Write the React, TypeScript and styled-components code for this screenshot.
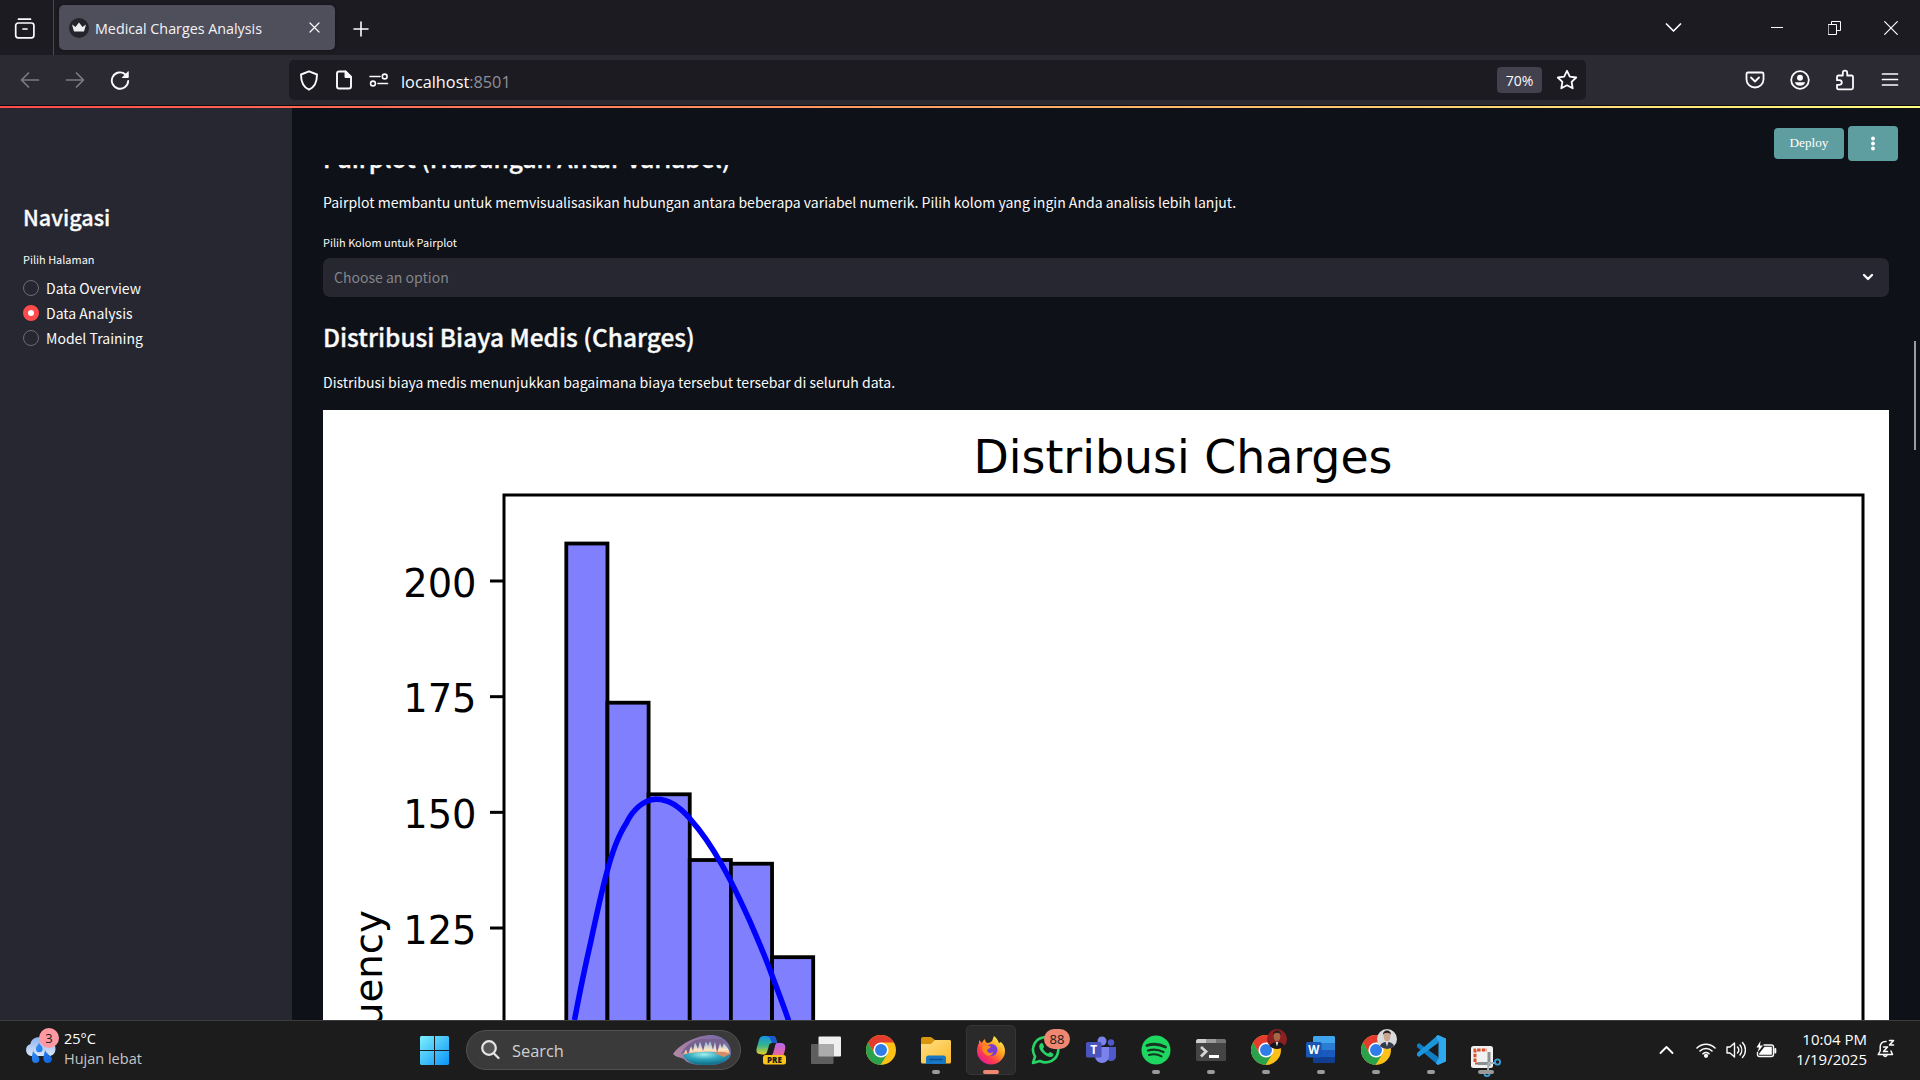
import React from "react";
import styled, { createGlobalStyle } from "styled-components";

const uiFont = `"Open Sans", "Noto Sans", sans-serif`;
const pageFont = `"Noto Sans CJK SC", "Noto Sans", sans-serif`;

const GlobalStyle = createGlobalStyle`
  * { box-sizing: border-box; }
  body { margin: 0; background: #0e1117; overflow: hidden; }
  svg { display: block; flex: none; }
`;

const Screen = styled.div`
  width: 1920px;
  height: 1080px;
  display: flex;
  flex-direction: column;
  overflow: hidden;
  font-family: ${uiFont};
`;

/* ---------- Browser chrome ---------- */

const TabStrip = styled.header`
  height: 55px;
  display: flex;
  align-items: center;
  background: #1c1b22;
  color: #fbfbfe;
`;

const FirefoxView = styled.div`
  width: 54px;
  height: 55px;
  padding: 1px 0 0 14px;
  display: flex;
  align-items: center;
  border-right: 1px solid #4b4a54;
`;

const Tab = styled.div`
  width: 276px;
  height: 45px;
  margin-left: 5px;
  padding: 0 15px 0 10px;
  display: flex;
  align-items: center;
  gap: 6px;
  border-radius: 5px;
  background: #4f4e5b;
  box-shadow: 0 0 3px rgba(0, 0, 0, 0.5);
`;

const TabTitle = styled.span`
  flex: 1;
  padding-top: 2px;
  font-size: 14.3px;
  line-height: 20px;
  white-space: nowrap;
  color: #f3f3f6;
`;

const NewTab = styled.div`
  margin: 2px 0 0 18px;
`;

const WindowControls = styled.div`
  margin-left: auto;
  padding-right: 22px;
  display: flex;
  align-items: center;
`;

const ControlSlot = styled.div<{ $before: number }>`
  margin-left: ${(p) => p.$before}px;
`;

const Toolbar = styled.div`
  height: 51px;
  display: flex;
  align-items: center;
  background: #2b2a33;
  border-bottom: 1px solid #0c0c10;
`;

const NavButtons = styled.div`
  width: 289px;
  padding-left: 20px;
  display: flex;
  align-items: center;
  gap: 25px;
`;

const UrlBar = styled.div`
  width: 1297px;
  height: 40px;
  padding: 0 7px 0 10px;
  display: flex;
  align-items: center;
  border-radius: 5px;
  background: #1c1b22;
`;

const UrlIcons = styled.div`
  display: flex;
  align-items: center;
  gap: 16px;
`;

const UrlText = styled.span`
  flex: 1;
  padding: 3px 0 0 12px;
  font-size: 16.3px;
  line-height: 22px;
  color: #fbfbfe;
`;

const UrlPort = styled.span`
  color: #8f8e96;
`;

const ZoomBadge = styled.span`
  width: 45px;
  height: 26px;
  margin-right: 13px;
  padding-top: 1px;
  border-radius: 4px;
  background: #42414d;
  color: #fbfbfe;
  font-size: 14px;
  line-height: 25px;
  text-align: center;
`;

const ToolbarActions = styled.div`
  margin-left: auto;
  padding-right: 20px;
  display: flex;
  align-items: center;
  gap: 25px;
`;

const Decoration = styled.div`
  height: 2px;
  flex: none;
  background: linear-gradient(90deg, #ff4b4b, #fffd80);
`;

/* ---------- Page ---------- */

const Page = styled.div`
  flex: 1;
  min-height: 0;
  display: flex;
  position: relative;
  font-family: ${pageFont};
  color: #fafafa;
`;

const Sidebar = styled.aside`
  width: 292px;
  padding: 94px 0 0 23px;
  background: #262730;
`;

const SidebarTitle = styled.h2`
  margin: 0;
  font-size: 21.6px;
  font-weight: 500;
  line-height: 30px;
  -webkit-text-stroke: 0.3px #fafafa;
`;

const FieldLabel = styled.div<{ $top: number }>`
  margin-top: ${(p) => p.$top}px;
  font-size: 10.95px;
  line-height: 16px;
`;

const RadioList = styled.div`
  margin-top: 8px;
`;

const RadioRow = styled.label`
  height: 25px;
  display: flex;
  align-items: center;
  gap: 7px;
  font-size: 14.04px;
  line-height: 24px;
`;

const RadioMark = styled.span<{ $on?: boolean }>`
  width: 16px;
  height: 16px;
  flex: none;
  border-radius: 50%;
  border: ${(p) => (p.$on ? "5px solid #ff4b4b" : "1px solid #6b6c74")};
  background: ${(p) => (p.$on ? "#fff" : "#262730")};
`;

const Main = styled.main`
  flex: 1;
  display: flex;
  flex-direction: column;
  background: #0e1117;
`;

const AppHeader = styled.div`
  height: 57px;
  flex: none;
  padding: 18px 22px 0 0;
  display: flex;
  justify-content: flex-end;
  align-items: flex-start;
  gap: 4px;
`;

const DeployButton = styled.button`
  width: 70px;
  height: 31px;
  margin: 2px 0 0;
  padding: 0 0 1px;
  border: 0;
  border-radius: 4px;
  background: #5f9ea0;
  color: #fff;
  font-family: "Liberation Serif", serif;
  font-size: 13.2px;
`;

const MenuButton = styled.button`
  width: 50px;
  height: 35px;
  padding: 0;
  display: flex;
  align-items: center;
  justify-content: center;
  border: 0;
  border-radius: 4px;
  background: #5f9ea0;
`;

const Content = styled.div`
  flex: 1;
  min-height: 0;
  overflow: hidden;
  padding: 0 31px;
  display: flex;
  flex-direction: column;
`;

const Heading = styled.h3<{ $top: number }>`
  margin: ${(p) => p.$top}px 0 0;
  flex: none;
  font-size: 24.45px;
  font-weight: 500;
  line-height: 36px;
  -webkit-text-stroke: 0.35px #fafafa;
`;

const Paragraph = styled.p<{ $top: number }>`
  margin: ${(p) => p.$top}px 0 0;
  flex: none;
  font-size: 14.04px;
  line-height: 22px;
`;

const Select = styled.div`
  height: 39px;
  flex: none;
  margin-top: 8px;
  padding: 0 15px 1px 11px;
  display: flex;
  align-items: center;
  justify-content: space-between;
  border-radius: 7px;
  background: #262730;
  color: #83848a;
  font-size: 14.04px;
  line-height: 22px;
`;

const Figure = styled.div`
  flex: none;
  margin-top: 17px;
  height: 610px;
  background: #fff;
`;

const ScrollThumb = styled.div`
  position: absolute;
  top: 233px;
  right: 4px;
  width: 2px;
  height: 109px;
  background: #9c9ca0;
`;

/* ---------- Taskbar ---------- */

const Taskbar = styled.footer`
  height: 60px;
  flex: none;
  display: flex;
  border-top: 1px solid #3d3d3d;
  background: #1c1c1c;
  color: #fff;
`;

const Weather = styled.div`
  width: 420px;
  padding: 8px 0 0 24px;
  display: flex;
  gap: 8px;
`;

const TwoLines = styled.div<{ $right?: boolean }>`
  display: flex;
  flex-direction: column;
  font-size: ${(p) => (p.$right ? 15 : 14.5)}px;
  line-height: 20px;
  text-align: ${(p) => (p.$right ? "right" : "left")};
`;

const Muted = styled.span`
  color: #c5c5c5;
`;

const BadgeHost = styled.div`
  position: relative;
`;

const CountBadge = styled.span<{ $color: string; $w: number; $x: number; $y: number }>`
  position: absolute;
  left: ${(p) => p.$x}px;
  top: ${(p) => p.$y}px;
  width: ${(p) => p.$w}px;
  height: 20px;
  border-radius: 10px;
  background: ${(p) => p.$color};
  color: #1b1b1b;
  font-size: 13px;
  line-height: 20px;
  text-align: center;
`;

const StartButton = styled.div`
  padding: 15px 17px 0 0;
`;

const SearchBox = styled.div`
  width: 275px;
  height: 40px;
  margin: 9px 0 0;
  padding: 0 8px 0 14px;
  display: flex;
  align-items: center;
  border: 1px solid #525252;
  border-radius: 20px;
  background: #3a3a3a;
`;

const SearchText = styled.span`
  flex: 1;
  padding: 1px 0 0 12px;
  font-size: 16.4px;
  line-height: 22px;
  color: #d0d0d0;
`;

const Apps = styled.div`
  padding: 4px 0 0 5px;
  display: flex;
  gap: 5px;
`;

const AppTile = styled.div<{ $active?: boolean; $drop?: number }>`
  width: 50px;
  height: 50px;
  padding-top: ${(p) => 9 + (p.$drop ?? 0)}px;
  display: flex;
  flex-direction: column;
  align-items: center;
  border: 1px solid ${(p) => (p.$active ? "#363636" : "transparent")};
  border-radius: 5px;
  background: ${(p) => (p.$active ? "#2a2a2a" : "transparent")};
`;

const Running = styled.span<{ $active?: boolean; $wide?: boolean; $gap?: number }>`
  width: ${(p) => (p.$active || p.$wide ? 16 : 8)}px;
  height: 4px;
  margin-top: ${(p) => p.$gap ?? 5}px;
  flex: none;
  border-radius: 2px;
  background: ${(p) => (p.$active ? "#f08770" : "#9a9a9a")};
`;

const Tray = styled.div`
  margin-left: auto;
  padding: 8px 25px 0 0;
  display: flex;
`;

const TrayIcons = styled.div`
  height: 40px;
  padding-top: 1px;
  margin-right: 19px;
  display: flex;
  align-items: center;
  gap: 10px;
`;

const TrayArrow = styled.div`
  margin-right: 12px;
`;

const Bell = styled.div`
  padding: 10px 0 0 10px;
`;

/* ---------- Icons ---------- */

type StrokeProps = { w: number; h: number; box: string; sw?: number; color?: string; children: React.ReactNode };

const Stroke = ({ w, h, box, sw = 1.5, color = "#fbfbfe", children }: StrokeProps) => (
  <svg width={w} height={h} viewBox={box} fill="none" stroke={color} strokeWidth={sw} strokeLinecap="round" strokeLinejoin="round">
    {children}
  </svg>
);

const ChromeIcon = ({ avatar }: { avatar?: "red" | "grey" }) => (
  <svg width="30" height="30" viewBox="0 0 30 30" overflow="visible">
    <circle cx="15" cy="15" r="15" fill="#fbc116" />
    <path d="M2 7.5A15 15 0 0 1 28 7.5H15L8.5 18.7z" fill="#e33b2e" />
    <path d="M2 7.5A15 15 0 0 0 14.5 30L21.5 18.8 15 15 8.5 18.8z" fill="#2aa24c" />
    <circle cx="15" cy="15" r="7.6" fill="#fff" />
    <circle cx="15" cy="15" r="6" fill="#2f7de9" />
    {avatar && (
      <g>
        <clipPath id={`clip-${avatar}`}>
          <circle cx="26" cy="4" r="10" />
        </clipPath>
        <g clipPath={`url(#clip-${avatar})`}>
          <rect x="16" y="-6" width="20" height="20" fill={avatar === "red" ? "#8d1f20" : "#d9dadb"} />
          <ellipse cx="26" cy="1.5" rx="3.4" ry="4.8" fill={avatar === "red" ? "#a36647" : "#c9a48f"} />
          <path d="M22 0C21.500-6 30.500-6 30 0C29-3 23-3 22 0" fill="#241c1c" />
          <path d="M18 15C18 9 22 7 26 7S34 9 34 15z" fill={avatar === "red" ? "#17161c" : "#343b4b"} />
          <path d="M24.600 7L26 11.500 27.400 7z" fill="#e2dede" />
        </g>
      </g>
    )}
  </svg>
);

const WeatherIcon = () => (
  <svg width="32" height="35" viewBox="0 -1 32 35">
    <defs>
      <linearGradient id="cloud" x1="0" y1="0" x2="0" y2="1">
        <stop offset="0" stopColor="#8db4ee" />
        <stop offset="1" stopColor="#dbe6fa" />
      </linearGradient>
      <linearGradient id="drop" x1="0" y1="0" x2="1" y2="1">
        <stop offset="0" stopColor="#3d96f5" />
        <stop offset="1" stopColor="#0b62e0" />
      </linearGradient>
    </defs>
    <path d="M7 26A6.200 6.200 0 0 1 6.500 14C7 8 15 5 20 9C26 8 31.500 13 31.500 19C31.500 23.500 28 26 25 26z" fill="url(#cloud)" />
    <path d="M15 12C15 14.500 12 15.500 12 19A3.300 3.300 0 0 0 18.600 19C18.600 15.500 15 14.500 15 12M9 20C9 24 7.500 25 8 29.300A3.700 3.700 0 0 0 15.400 29.300C15.400 25 9 24 9 20M21 19C21 24 19 25 19.500 29.300A4.300 4.300 0 0 0 28 29.300C28 25 21 24 21 19" fill="url(#drop)" />
  </svg>
);

const StartIcon = () => (
  <svg width="29" height="29" viewBox="0 0 29 29">
    <defs>
      <linearGradient id="win" x1="0" y1="0" x2="29" y2="29" gradientUnits="userSpaceOnUse">
        <stop offset="0" stopColor="#7df0ff" />
        <stop offset="1" stopColor="#0b93f6" />
      </linearGradient>
    </defs>
    <path d="M1 0H14V14H0V1zM15 0H28L29 1V14H15zM0 15H14V29H1L0 28zM15 15H29V28L28 29H15z" fill="url(#win)" />
  </svg>
);

const SearchArt = () => (
  <svg width="60" height="32" viewBox="0 0 60 32">
    <defs>
      <linearGradient id="arch" x1="0" y1="0" x2="1" y2="0">
        <stop offset="0" stopColor="#b58ba6" />
        <stop offset="0.5" stopColor="#8a6fa5" />
        <stop offset="1" stopColor="#6f6ca8" />
      </linearGradient>
      <linearGradient id="sky" x1="0" y1="0" x2="0" y2="1">
        <stop offset="0" stopColor="#8fb6d8" />
        <stop offset="0.6" stopColor="#fde6c4" />
        <stop offset="1" stopColor="#f4a877" />
      </linearGradient>
      <radialGradient id="pool" cx="0.45" cy="0.2" r="0.7">
        <stop offset="0" stopColor="#a4f0ee" />
        <stop offset="0.5" stopColor="#2fa7bd" />
        <stop offset="1" stopColor="#14748f" />
      </radialGradient>
    </defs>
    <path d="M1 20C8 10 25 1 39 1C52 1 60 11 59 20C58 26 50 31 36 31C24 31 15 30 12 25C8 23 5 24 1 20" fill="url(#arch)" />
    <path d="M11 21C14 14 20 8 30 8H50C55 11 57 16 58 20H11z" fill="url(#sky)" />
    <path d="M12 19L14 15 16 21 19 12 21 17 23 8 26 15 28 7 31 17 34 7 36 12 38 6 41 16 43 7 45 19 48 9 50 14 52 9 56 15 50 5H30C20 5 12 14 9 20z" fill="#76618f" />
    <path d="M11 21C22 17 48 17 58 20C57 26 50 31 36 31C24 31 15 30 11 21" fill="url(#pool)" />
    <path d="M42 19Q50 16 58 20L52 23z" fill="#d98b66" />
  </svg>
);

const CopilotIcon = () => (
  <svg width="30" height="30" viewBox="0 0 30 30">
    <defs>
      <linearGradient id="cpA" x1="0" y1="0" x2="0" y2="1">
        <stop offset="0" stopColor="#1594e4" />
        <stop offset="0.5" stopColor="#35b58b" />
        <stop offset="1" stopColor="#e8cf28" />
      </linearGradient>
      <linearGradient id="cpB" x1="0" y1="0" x2="0" y2="1">
        <stop offset="0" stopColor="#b667ee" />
        <stop offset="1" stopColor="#f2658b" />
      </linearGradient>
    </defs>
    <path d="M8 1H17C20 1 20 4 21 8H16C13 8 13 11 12 14L11 17C10 20 7 20 4 19C0 19 0 15 1 12L3 5C4 2 5 1 8 1" fill="url(#cpA)" />
    <path d="M12 1H17C20 1 20 4 21 8H16C14 3 14 2 10 1z" fill="#1b57cf" />
    <path d="M21 8H25C29 8 30 11 29 15L27 22H13C16 21 17 19 18 15L19 11C19.500 9 20 8 21 8" fill="url(#cpB)" />
    <rect x="7" y="20" width="23" height="9.500" rx="2.500" fill="#fcc419" />
    <text x="18.500" y="27.700" fontFamily="Open Sans, sans-serif" fontWeight="800" fontSize="8" textAnchor="middle" fill="#1b1b1b">PRE</text>
  </svg>
);

const TaskViewIcon = () => (
  <svg width="30" height="30" viewBox="0 0 30 30">
    <rect x="7.500" y="1.500" width="22.500" height="20" rx="1" fill="#f0f0f0" />
    <rect x="0" y="9" width="22.500" height="20" rx="1" fill="#5e5e5e" />
    <rect x="7.500" y="9" width="15" height="12.500" fill="#ababab" />
  </svg>
);

const FolderIcon = () => (
  <svg width="30" height="30" viewBox="0 0 30 30">
    <defs>
      <linearGradient id="fold" x1="0" y1="0" x2="1" y2="1">
        <stop offset="0" stopColor="#ffe083" />
        <stop offset="1" stopColor="#fbb92c" />
      </linearGradient>
    </defs>
    <path d="M0 4Q0 2 2 2H10L14 5H28Q30 5 30 7V15H0z" fill="#d8960f" />
    <path d="M0 9H10L14 5H28.500Q30 5 30 6.500V27Q30 28.500 28.500 28.500H1.500Q0 28.500 0 27z" fill="url(#fold)" />
    <path d="M5 29V23Q5 20.500 7.500 20.500H22.500Q25 20.500 25 23V29z" fill="#1877c4" />
    <path d="M9 24.500H21" stroke="#0c4e8c" strokeWidth="1.500" strokeLinecap="round" />
  </svg>
);

const FirefoxIcon = () => (
  <svg width="30" height="30" viewBox="0 0 30 30">
    <defs>
      <linearGradient id="ff" x1="0.85" y1="0.1" x2="0.2" y2="0.9">
        <stop offset="0" stopColor="#fff04a" />
        <stop offset="0.4" stopColor="#ff9a1f" />
        <stop offset="0.75" stopColor="#ff3b4e" />
        <stop offset="1" stopColor="#e4208f" />
      </linearGradient>
    </defs>
    <path d="M18 1C21 3 22 6 23 8L25 7C28 10 29 13 29 16A14 13.500 0 0 1 1 16C1 12 2 10 3 8V5L6 8C7 5 9 4 9 4C9 6 10 8 12 8C13 8 15 7 16 6C17 4 17 3 18 1" fill="url(#ff)" />
    <circle cx="15.500" cy="15" r="6" fill="#7a3fd1" />
    <path d="M6 12C9 10 13 10 15 12L11 15C11 18 15 19 17 17C17 20 13 22 10 20C7 18 6 15 6 12" fill="#ff8a1c" />
  </svg>
);

const WhatsAppIcon = () => (
  <svg width="30" height="30" viewBox="0 0 30 30">
    <path d="M2 28L4 21.500A12.600 12.600 0 1 1 9 26z" fill="none" stroke="#27d366" strokeWidth="2.600" strokeLinejoin="round" />
    <path d="M9.500 8.500C10.500 7.500 11.500 8 12 9L13 11.500C13.200 12.500 12 13 12 13.700C13 16 15 17.700 17 18.500C18 18.500 18.300 17 19.200 17L22 18.500C23 19.500 22 21.500 20.500 22C16 23 8 16 8.200 11.500C8.200 10.500 8.800 9 9.500 8.500" fill="#27d366" />
  </svg>
);

const TeamsIcon = () => (
  <svg width="30" height="30" viewBox="0 0 30 30">
    <circle cx="25" cy="7.500" r="3.200" fill="#5059c9" />
    <path d="M20 12H30V20A5 5 0 0 1 20 22z" fill="#5059c9" />
    <circle cx="16" cy="6" r="4.500" fill="#7b83eb" />
    <path d="M9 12H23V21A7 7 0 0 1 9 21z" fill="#7b83eb" />
    <rect x="0" y="7" width="15.500" height="15.500" rx="1.500" fill="#4b53bc" />
    <text x="7.700" y="19" fontFamily="Open Sans, sans-serif" fontWeight="700" fontSize="12" textAnchor="middle" fill="#fff">T</text>
  </svg>
);

const SpotifyIcon = () => (
  <svg width="30" height="30" viewBox="0 0 30 30" fill="none" stroke="#16341f" strokeLinecap="round">
    <circle cx="15" cy="15" r="14.500" fill="#1ed760" stroke="none" />
    <path d="M6 10.500C12 8.500 19 9.200 24.500 12" strokeWidth="2.800" />
    <path d="M7 15.500C12 14 18 14.600 22.500 17" strokeWidth="2.300" />
    <path d="M8 20C12 18.900 17 19.300 20.500 21.400" strokeWidth="2" />
  </svg>
);

const TerminalIcon = () => (
  <svg width="30" height="30" viewBox="0 0 30 30">
    <rect y="4" width="30" height="22" rx="1.500" fill="#454545" />
    <path d="M1.500 4H10V8H0V5.500z" fill="#cfcfcf" />
    <path d="M10 4H20V8H10z" fill="#9b9b9b" />
    <path d="M20 4H28.500L30 5.500V8H20z" fill="#757575" />
    <path d="M5 12L10 16.500 5 21.500" fill="none" stroke="#d5d5d5" strokeWidth="2.800" />
    <path d="M13 21.500H23" stroke="#fff" strokeWidth="3" />
  </svg>
);

const WordIcon = () => (
  <svg width="30" height="30" viewBox="0 0 30 30">
    <path d="M8 1H28L29 2V8H7V2z" fill="#41a5ee" />
    <path d="M7 8H29V15H7z" fill="#2b7cd3" />
    <path d="M7 15H29V22H7z" fill="#185abd" />
    <path d="M7 22H29V27L28 28H8L7 27z" fill="#103f91" />
    <rect x="0" y="7" width="15.500" height="15.500" rx="1.500" fill="#1857b8" />
    <text x="7.700" y="18.800" fontFamily="Open Sans, sans-serif" fontWeight="700" fontSize="11.500" textAnchor="middle" fill="#fff">W</text>
  </svg>
);

const CodeIcon = () => (
  <svg width="30" height="30" viewBox="0 0 30 30">
    <path d="M1 9.500L3 8 22 22V30L1 12z" fill="#0f7cc4" />
    <path d="M1 20.500L3 22 22 8V0L1 18z" fill="#1b95dc" />
    <path d="M22 0L30 3.500V26.500L22 30L20 28.500L22.500 23V7L20 1.500z" fill="#2ea9f0" />
  </svg>
);

const SnipIcon = () => (
  <svg width="30" height="32" viewBox="0 0 30 32" fill="none">
    <rect x="0" y="0" width="22" height="22" rx="2.500" fill="#f1f1f1" />
    <path d="M4 16V4H16" stroke="#d8502c" strokeWidth="3" strokeDasharray="3.500 1.200" />
    <path d="M4 17.500H16" stroke="#d8502c" strokeWidth="2" strokeDasharray="3 1.500" />
    <path d="M18 6V20M7 17.500H19" stroke="#8b9095" strokeWidth="3" />
    <path d="M17 17L25 17M17.500 17L17 25" stroke="#a9b1b7" strokeWidth="2" />
    <circle cx="26.500" cy="16" r="2.600" stroke="#3aa0dc" strokeWidth="1.800" />
    <circle cx="16" cy="27.500" r="2.600" stroke="#3aa0dc" strokeWidth="1.800" />
  </svg>
);

/* ---------- Histogram ---------- */

const ticks = [200, 175, 150, 125];
const counts = [208.1, 173.700, 153.900, 139.700, 138.900, 118.700];
const yOf = (v: number) => 581 + (200 - v) * 4.627;
const binLeft = 566.3;
const binWidth = 41.15;

const Histogram = () => (
  <svg width="1566" height="610" viewBox="323 410 1566 610" fontFamily="DejaVu Sans, sans-serif">
    <text x="1183" y="473" fontSize="46" textLength="419" lengthAdjust="spacingAndGlyphs" textAnchor="middle">Distribusi Charges</text>
    {counts.map((c, i) => (
      <rect key={i} x={binLeft + i * binWidth} y={yOf(c)} width={binWidth} height={700} fill="#8080ff" stroke="#000" strokeWidth="3.800" />
    ))}
    <path
      d="M574.500 1020C580 991 585 967 590.800 941.700C596 917 601 894 607 871.700C612 853 618 836 626.300 823.300C632 811 643 799.500 656 799.200C668 799 680 807 689.600 818.300C701 831 712 847 722 865C733 884 742 904 750.800 923.300C758 940 765 956 771.200 973.300C777 989 783 1004 788.400 1020L790 1026"
      fill="none"
      stroke="#0000ff"
      strokeWidth="5.500"
    />
    {ticks.map((t) => (
      <g key={t}>
        <path d={`M490 ${yOf(t)}H504`} stroke="#000" strokeWidth="3" />
        <text x="476.500" y={yOf(t) + 15.600} fontSize="38.400" textAnchor="end">{t}</text>
      </g>
    ))}
    <path d="M504 1030V495H1863V1030" fill="none" stroke="#000" strokeWidth="3" />
    <text transform="translate(382.300 910) rotate(-90)" fontSize="38.700" textAnchor="end">Frequency</text>
  </svg>
);

const pages = ["Data Overview", "Data Analysis", "Model Training"];

export default function App() {
  return (
    <Screen>
      <GlobalStyle />
      <TabStrip>
        <FirefoxView>
          <Stroke w={22} h={21} box="0 0 22 21" sw={1.7}>
            <path d="M4.500 1.200H16.500" />
            <rect x="1.700" y="5" width="18.200" height="14.800" rx="2.500" />
            <path d="M9 11H13" />
          </Stroke>
        </FirefoxView>
        <Tab>
          <svg width="20" height="20" viewBox="0 0 20 20">
            <circle cx="10" cy="10" r="10" fill="#24242c" />
            <path d="M3 6.500L6.500 9 10 4.500 13.500 9 17 6.500 15 13.500H5z" fill="#eeeef0" />
          </svg>
          <TabTitle>Medical Charges Analysis</TabTitle>
          <Stroke w={11} h={11} box="0 0 11 11" sw={1.2}>
            <path d="M1 1L10 10M10 1L1 10" />
          </Stroke>
        </Tab>
        <NewTab>
          <Stroke w={16} h={16} box="0 0 16 16" sw={1.6}>
            <path d="M8 1V15M1 8H15" />
          </Stroke>
        </NewTab>
        <WindowControls>
          <ControlSlot $before={0}>
            <Stroke w={17} h={11} box="0 0 17 11" sw={1.7}>
              <path d="M1.500 2L8.500 9L15.500 2" />
            </Stroke>
          </ControlSlot>
          <ControlSlot $before={89}>
            <Stroke w={12} h={4} box="0 0 12 4" sw={1}>
              <path d="M0 1.500H12" />
            </Stroke>
          </ControlSlot>
          <ControlSlot $before={45}>
            <Stroke w={13} h={14} box="0 0 13 14" sw={1}>
              <path d="M.5 3.500H8.500V13.500H.5zM3.500 3.500V.5H12.500V9.500H8.500" />
            </Stroke>
          </ControlSlot>
          <ControlSlot $before={43}>
            <Stroke w={14} h={14} box="0 0 14 14" sw={1.2}>
              <path d="M.7 .7L13.300 13.300M13.300 .7L.7 13.300" />
            </Stroke>
          </ControlSlot>
        </WindowControls>
      </TabStrip>

      <Toolbar>
        <NavButtons>
          <Stroke w={20} h={18} box="0 0 20 18" color="#7c7b84" sw={1.7}>
            <path d="M18.500 9H2M8.500 2L1.500 9L8.500 16" />
          </Stroke>
          <Stroke w={20} h={18} box="0 0 20 18" color="#7c7b84" sw={1.7}>
            <path d="M1.500 9H18M11.500 2L18.500 9L11.500 16" />
          </Stroke>
          <Stroke w={20} h={20} box="0 0 20 20" sw={1.9}>
            <path d="M15.500 4.500A8.200 8.200 0 1 0 18.200 11" />
            <path d="M18.200 2V7.500H12.700z" fill="#fbfbfe" strokeWidth="1" />
          </Stroke>
        </NavButtons>
        <UrlBar>
          <UrlIcons>
            <Stroke w={20} h={21} box="0 0 20 21" sw={1.9}>
              <path d="M10 1.300L18 4.500C18 11 16 17 10 19.700C4 17 2 11 2 4.500z" />
            </Stroke>
            <Stroke w={18} h={20} box="0 0 18 20" sw={1.9}>
              <path d="M4 1.500H10.500L16 7V16.500Q16 18.500 14 18.500H4Q2 18.500 2 16.500V3.500Q2 1.500 4 1.500" />
              <path d="M10.500 1.500V7H16z" fill="#fbfbfe" />
            </Stroke>
            <Stroke w={20} h={14} box="0 0 20 14" sw={1.6}>
              <path d="M1 3.500H11M9 10.500H18.500" />
              <circle cx="15.700" cy="3.500" r="2.400" />
              <circle cx="4" cy="10.500" r="2.400" />
            </Stroke>
          </UrlIcons>
          <UrlText>
            localhost<UrlPort>:8501</UrlPort>
          </UrlText>
          <ZoomBadge>70%</ZoomBadge>
          <Stroke w={24} h={22} box="0 0 24 22" sw={1.8}>
            <path d="M12 1.800L14.800 7.600L21.200 8.500L16.600 12.900L17.700 19.300L12 16.300L6.300 19.300L7.400 12.900L2.800 8.500L9.200 7.600z" />
          </Stroke>
        </UrlBar>
        <ToolbarActions>
          <Stroke w={20} h={18} box="0 0 20 18" sw={1.8}>
            <path d="M3 1.500H17Q18.500 1.500 18.500 3V8.500A8.500 8 0 0 1 1.500 8.500V3Q1.500 1.500 3 1.500M6 6.500L10 10.500L14 6.500" />
          </Stroke>
          <Stroke w={20} h={20} box="0 0 20 20" sw={1.8}>
            <circle cx="10" cy="10" r="8.800" />
            <circle cx="10" cy="7.800" r="3" fill="#fbfbfe" stroke="none" />
            <path d="M4.800 12.200H15.200Q14 15.800 10 15.800T4.800 12.200" fill="#fbfbfe" stroke="none" />
          </Stroke>
          <Stroke w={20} h={22} box="0 0 20 22" sw={1.8}>
            <path d="M3.500 6.500H7.800V4Q7.800 1.700 10 1.700T12.200 4V6.500H16.500Q18 6.500 18 8V18.800Q18 20.300 16.500 20.300H3.500Q2 20.300 2 18.800V15.800H4.500Q6.800 15.500 6.800 13.500T4.500 11.200H2V8Q2 6.500 3.500 6.500" />
          </Stroke>
          <Stroke w={20} h={16} box="0 0 20 16" sw={1.7}>
            <path d="M2.500 2H17.500M2.500 7.500H17.500M2.500 13H17.500" />
          </Stroke>
        </ToolbarActions>
      </Toolbar>
      <Decoration />

      <Page>
        <Sidebar>
          <SidebarTitle>Navigasi</SidebarTitle>
          <FieldLabel $top={19}>Pilih Halaman</FieldLabel>
          <RadioList>
            {pages.map((p) => (
              <RadioRow key={p}>
                <RadioMark $on={p === "Data Analysis"} />
                {p}
              </RadioRow>
            ))}
          </RadioList>
        </Sidebar>
        <Main>
          <AppHeader>
            <DeployButton>Deploy</DeployButton>
            <MenuButton>
              <svg width="6" height="16" viewBox="0 0 6 16" fill="#fff">
                <circle cx="3" cy="2.500" r="1.900" />
                <circle cx="3" cy="7.500" r="1.900" />
                <circle cx="3" cy="12.500" r="1.900" />
              </svg>
            </MenuButton>
          </AppHeader>
          <Content>
            <Heading $top={-25}>Pairplot (Hubungan Antar Variabel)</Heading>
            <Paragraph $top={15}>
              Pairplot membantu untuk memvisualisasikan hubungan antara beberapa variabel numerik. Pilih kolom yang ingin Anda analisis lebih lanjut.
            </Paragraph>
            <FieldLabel $top={21}>Pilih Kolom untuk Pairplot</FieldLabel>
            <Select>
              Choose an option
              <Stroke w={12} h={8} box="0 0 12 8" sw={2.3} color="#fafafa">
                <path d="M2 2L6 6L10 2" />
              </Stroke>
            </Select>
            <Heading $top={22}>Distribusi Biaya Medis (Charges)</Heading>
            <Paragraph $top={16}>Distribusi biaya medis menunjukkan bagaimana biaya tersebut tersebar di seluruh data.</Paragraph>
            <Figure>
              <Histogram />
            </Figure>
          </Content>
        </Main>
        <ScrollThumb />
      </Page>

      <Taskbar>
        <Weather>
          <BadgeHost>
            <WeatherIcon />
            <CountBadge $color="#ff99a4" $w={20} $x={15} $y={-1}>3</CountBadge>
          </BadgeHost>
          <TwoLines>
            <span>25°C</span>
            <Muted>Hujan lebat</Muted>
          </TwoLines>
        </Weather>
        <StartButton>
          <StartIcon />
        </StartButton>
        <SearchBox>
          <Stroke w={19} h={20} box="0 0 19 20" sw={2.2} color="#e6e6e6">
            <circle cx="8" cy="8" r="6.800" fill="#555" />
            <path d="M13 13.500L17.500 18" />
          </Stroke>
          <SearchText>Search</SearchText>
          <SearchArt />
        </SearchBox>
        <Apps>
          <AppTile><CopilotIcon /></AppTile>
          <AppTile><TaskViewIcon /></AppTile>
          <AppTile><ChromeIcon /></AppTile>
          <AppTile><FolderIcon /><Running /></AppTile>
          <AppTile $active><FirefoxIcon /><Running $active /></AppTile>
          <AppTile>
            <BadgeHost>
              <WhatsAppIcon />
              <CountBadge $color="#f08770" $w={26} $x={13} $y={-6}>88</CountBadge>
            </BadgeHost>
          </AppTile>
          <AppTile><TeamsIcon /></AppTile>
          <AppTile><SpotifyIcon /><Running /></AppTile>
          <AppTile><TerminalIcon /><Running /></AppTile>
          <AppTile><ChromeIcon avatar="red" /><Running /></AppTile>
          <AppTile><WordIcon /><Running /></AppTile>
          <AppTile><ChromeIcon avatar="grey" /><Running /></AppTile>
          <AppTile><CodeIcon /><Running /></AppTile>
          <AppTile $drop={11}><SnipIcon /><Running $wide $gap={-8} /></AppTile>
        </Apps>
        <Tray>
          <TrayIcons>
            <TrayArrow>
              <Stroke w={15} h={10} box="0 0 15 10" sw={1.9}>
                <path d="M1.500 8L7.500 2L13.500 8" />
              </Stroke>
            </TrayArrow>
            <Stroke w={20} h={16} box="0 0 20 16" sw={1.6}>
              <path d="M1 6A12.700 12.700 0 0 1 19 6M4 9A8.500 8.500 0 0 1 16 9M7 11.800A4.300 4.300 0 0 1 13 11.800" />
              <circle cx="10" cy="13.800" r="1.300" fill="#fff" />
            </Stroke>
            <Stroke w={20} h={18} box="0 0 20 18" sw={1.4}>
              <path d="M1 6V12H4L8.500 16V2L4 6zM11.500 6A4.500 4.500 0 0 1 11.500 12M14 4A8 8 0 0 1 14 14M16.500 1.500A11 11 0 0 1 16.500 16.500" />
            </Stroke>
            <Stroke w={21} h={18} box="0 0 21 18" sw={1.4}>
              <path d="M8 4H15.500Q17.500 4 17.500 6V13.500Q17.500 15.500 15.500 15.500H3.500Q1.500 15.500 1.500 13.500V11.500" />
              <path d="M8.500 5.700H15.800V13.800H3.200V12.500z" fill="#fff" stroke="none" />
              <path d="M19.300 8V11.500" strokeWidth="2" />
              <path d="M4.500 0L.5 6.500H3L1.500 11.500L7 4.500H4z" fill="#fff" stroke="none" />
            </Stroke>
          </TrayIcons>
          <TwoLines $right>
            <span>10:04 PM</span>
            <span>1/19/2025</span>
          </TwoLines>
          <Bell>
            <Stroke w={18} h={20} box="0 0 18 20" sw={1.5}>
              <path d="M9 2.500C5 2.300 3.200 5 3.200 8V12L1.200 15.500H15.500L14 12M6.500 16Q8 19 10 16" />
              <path d="M6.500 8H10.500L6.500 12.500H10.500M12.500 1.500H16.500L12.500 6H16.500" strokeWidth="1.600" />
            </Stroke>
          </Bell>
        </Tray>
      </Taskbar>
    </Screen>
  );
}
